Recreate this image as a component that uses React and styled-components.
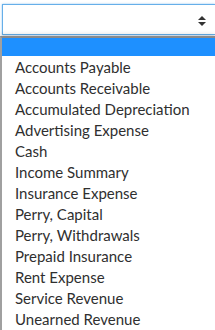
import styled, { createGlobalStyle } from "styled-components";

const GlobalStyle = createGlobalStyle`
    html, body {
        margin: 0;
        padding: 0;
        background: #fff;
        overflow: hidden;
    }
    body {
        font-family: "Lato", "Open Sans", sans-serif;
    }
`

const Page = styled.div`
    height: 330px;
    display: flex;
    flex-direction: column;
`
const SelectBox = styled.div`
    margin: 4px 0 0 2px;
    height: 34px;
    box-sizing: border-box;
    border: 1px solid #66afe9;
    border-right: none;
    box-shadow: 0 0 2px rgba(102,175,233,.7);
    background: #fff;
    display: flex;
    align-items: center;
    justify-content: flex-end;
    padding: 3px 9px 0 0;
`
const Arrows = styled.svg`
    width: 8px;
    height: 10px;
`
const ListBox = styled.ul`
    list-style: none;
    margin: 1px 0 0 0;
    padding: 0;
    flex: 1;
    border-top: 2px solid #8a8a8a;
    border-left: 2px solid #a0a0a0;
    background: #fff;
    box-shadow: 0 -2px 4px rgba(0,0,0,.12);
`
const Option = styled.li`
    height: ${props => props.selected ? '18px' : '21px'};
    line-height: 21px;
    padding-left: 13px;
    margin-bottom: ${props => props.selected ? '1px' : '0'};
    font-size: 15px;
    color: #2f2f2f;
    white-space: nowrap;
    background: ${props => props.selected ? '#1e90ff' : 'transparent'};
`

const accounts = [
    "Accounts Payable",
    "Accounts Receivable",
    "Accumulated Depreciation",
    "Advertising Expense",
    "Cash",
    "Income Summary",
    "Insurance Expense",
    "Perry, Capital",
    "Perry, Withdrawals",
    "Prepaid Insurance",
    "Rent Expense",
    "Service Revenue",
    "Unearned Revenue",
];

const App = () => {
  return (
      <Page>
          <GlobalStyle />
          <SelectBox>
              <Arrows viewBox="0 0 8 10">
                  <path d="M4 0 L8 4 L0 4 Z" fill="#333" />
                  <path d="M0 6 L8 6 L4 10 Z" fill="#333" />
              </Arrows>
          </SelectBox>
          <ListBox>
              <Option selected />
              {accounts.map(name => (
                  <Option key={name}>{name}</Option>
              ))}
          </ListBox>
      </Page>
  );
};

export default App;
